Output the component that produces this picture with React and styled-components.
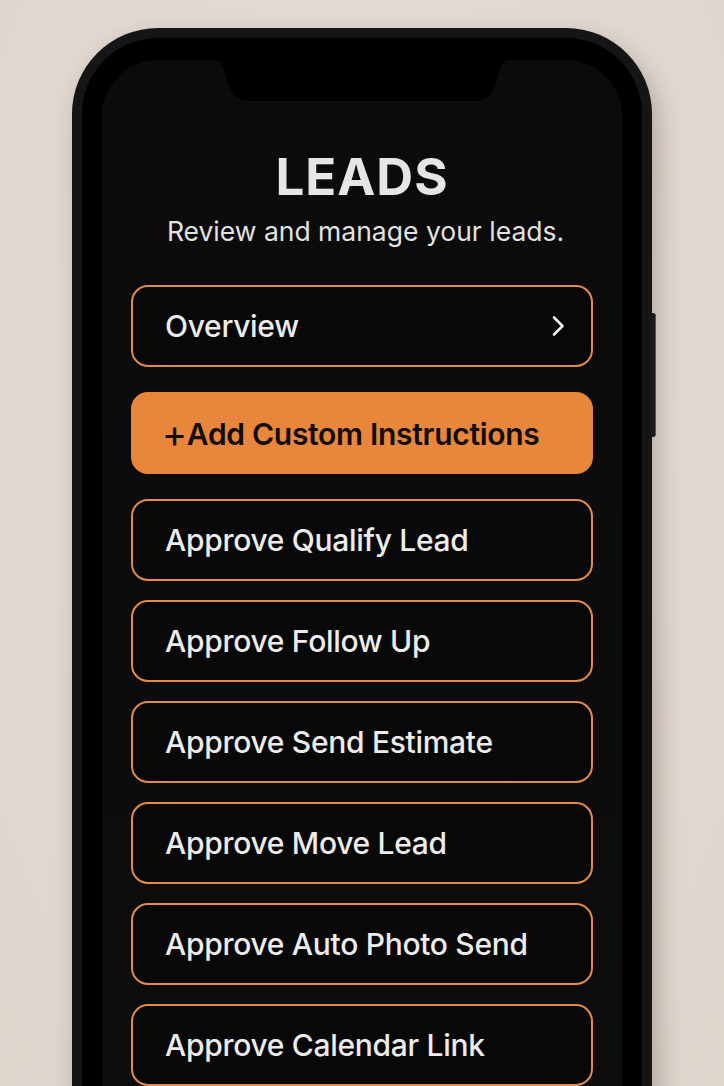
import React from 'react'
import styled, { createGlobalStyle } from 'styled-components'

const GlobalStyle = createGlobalStyle`
    html, body {
        margin: 0;
        padding: 0;
        background: #e2d9d1;
    }
    * { box-sizing: border-box; }
`

const items = [
    'Approve Qualify Lead',
    'Approve Follow Up',
    'Approve Send Estimate',
    'Approve Move Lead',
    'Approve Auto Photo Send',
    'Approve Calendar Link',
]

function Chevron() {
    return (
        <svg width="18" height="24" viewBox="0 0 18 24" fill="none">
            <path d="M5 3.5 L13.5 12 L5 20.5" stroke="#ececec" strokeWidth="2.6"
                strokeLinecap="round" strokeLinejoin="round" />
        </svg>
    )
}

function Notch() {
    return (
        <NotchShape width="298" height="42" viewBox="0 0 298 42">
            <path d="M0 0 H298 C290 0 288 5 286 13 C281 33 275 41 262 41 L36 41 C23 41 17 33 12 13 C10 5 8 0 0 0 Z" fill="#000" />
        </NotchShape>
    )
}

function App() {
    return (
        <Page>
            <GlobalStyle />
            <Phone>
                <SideButton />
                <Bezel>
                    <Screen>
                        <Notch />
                        <Header>
                            <h1>LEADS</h1>
                            <p>Review and manage your leads.</p>
                        </Header>
                        <List>
                            <Row>
                                <span>Overview</span>
                                <Chevron />
                            </Row>
                            <Row primary>
                                <span><Plus>+</Plus>Add Custom Instructions</span>
                            </Row>
                            {items.map((item) => (
                                <Row key={item}>
                                    <span>{item}</span>
                                </Row>
                            ))}
                        </List>
                    </Screen>
                </Bezel>
            </Phone>
        </Page>
    )
}

const Page = styled.div`
    width: 724px;
    height: 1086px;
    overflow: hidden;
    padding: 28px 72px 0 72px;
    background: radial-gradient(ellipse at 50% 40%, #e7dfd8 0%, #ded5cd 100%);
    font-family: Inter, "Noto Sans", "Liberation Sans", sans-serif;
`

const Phone = styled.div`
    position: relative;
    width: 580px;
    height: 1160px;
    padding: 10px;
    border-radius: 86px 86px 0 0;
    background: #151515;
    box-shadow: 6px 10px 24px rgba(60, 40, 30, 0.28);
`

const SideButton = styled.div`
    position: absolute;
    right: -4px;
    top: 285px;
    width: 5px;
    height: 124px;
    border-radius: 0 3px 3px 0;
    background: #1a1a1a;
    border-right: 1px solid #555;
`

const Bezel = styled.div`
    height: 100%;
    padding: 22px 20px 0 20px;
    border-radius: 76px 76px 0 0;
    background: #000;
`

const Screen = styled.div`
    position: relative;
    height: 100%;
    padding: 86px 29px 0 29px;
    border-radius: 56px 56px 0 0;
    background: linear-gradient(180deg, #0b0b0b 0%, #0d0d0d 100%);
`

const NotchShape = styled.svg`
    position: absolute;
    top: 0;
    left: 111px;
    display: block;
`

const Header = styled.div`
    text-align: center;
    margin-bottom: 38px;
    h1 {
        margin: 0;
        font-size: 51px;
        line-height: 62px;
        font-weight: 700;
        letter-spacing: 1px;
        color: #e6e6e6;
    }
    p {
        margin: 7px 0 0 0;
        padding-left: 7px;
        font-size: 26.5px;
        line-height: 32px;
        font-weight: 400;
        color: #e2e2e2;
    }
`

const List = styled.div`
    display: flex;
    flex-direction: column;
    gap: 19px;
    & > :nth-child(1),
    & > :nth-child(2) {
        margin-bottom: 6px;
    }
`

const Row = styled.div`
    height: 82px;
    display: flex;
    align-items: center;
    justify-content: space-between;
    padding: 0 24px 0 32px;
    border-radius: 17px;
    border: 2px solid ${(p) => (p.primary ? '#e8873b' : '#e58b45')};
    background: ${(p) => (p.primary ? '#e8873b' : '#080808')};
    color: ${(p) => (p.primary ? '#120c06' : '#ececec')};
    font-size: 30px;
    font-weight: ${(p) => (p.primary ? 600 : 500)};
    letter-spacing: -0.3px;
    span {
        white-space: nowrap;
    }
`

const Plus = styled.span`
    display: inline-block;
    margin-left: -3px;
    font-size: 38px;
    font-weight: 400;
    line-height: 1;
    vertical-align: -2px;
`

export default App
